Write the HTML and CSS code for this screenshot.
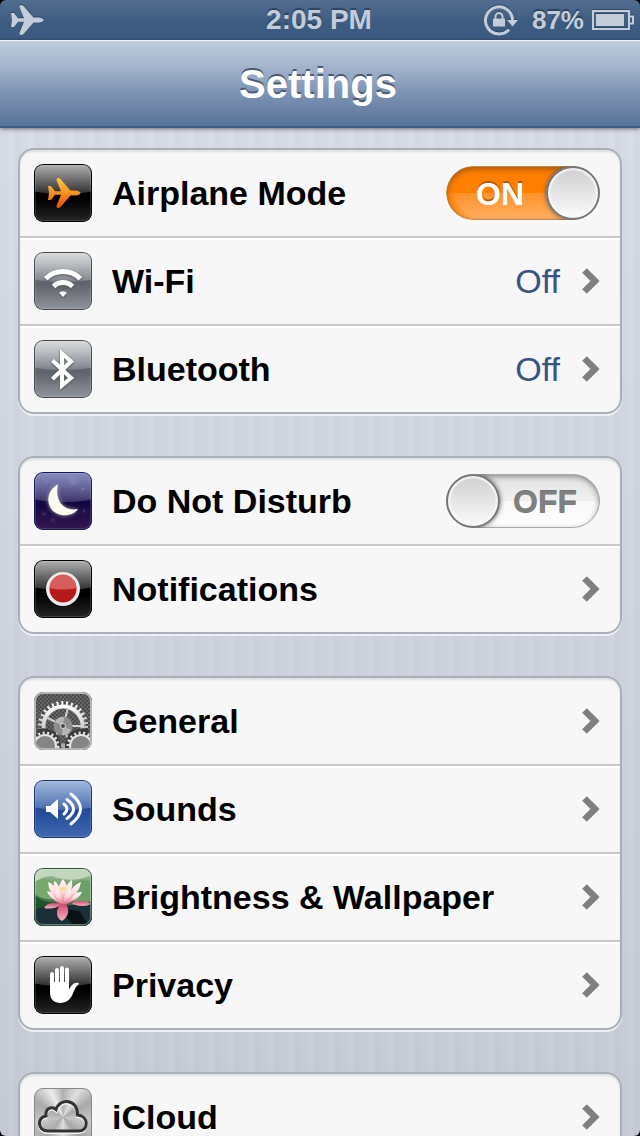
FILE: index.html
```html
<!DOCTYPE html>
<html lang="en">
<head>
<meta charset="utf-8">
<meta name="viewport" content="width=device-width">
<title>Settings</title>
<link rel="stylesheet" href="styles.css">
</head>
<body>
<svg class="defs" aria-hidden="true">
  <defs>
    <symbol id="plane" viewBox="0 0 34 32">
      <path d="M1 9H4L8 14.2H14L9.5 3Q9.3 1 11 1Q12.5 1 13.500 2L23.500 13.500H29Q33.500 14.500 33.500 16Q33.500 17.500 29 18.500H23.500L13.500 30Q12.500 31 11 31Q9.300 31 9.500 29L14 17.800H8L4 23H1L2 16Z"/>
    </symbol>
    <symbol id="chevron" viewBox="0 0 18 26">
      <path d="M2.500 2.500L13 13L2.500 23.500" fill="none" stroke="#7f7f7f" stroke-width="6.500"/>
    </symbol>
    <linearGradient id="flame" x1="0" y1="0" x2="0" y2="1">
      <stop offset="0" stop-color="#ffc83d"/><stop offset=".5" stop-color="#f69022"/><stop offset="1" stop-color="#e84e00"/>
    </linearGradient>
    <linearGradient id="steel" x1="0" y1="0" x2="0" y2="1">
      <stop offset="0" stop-color="#fafafa"/><stop offset="1" stop-color="#a8a8a8"/>
    </linearGradient>
    <linearGradient id="petal" x1="0" y1="0" x2="0" y2="1">
      <stop offset="0" stop-color="#fffaf5"/><stop offset=".5" stop-color="#fbd8dc"/><stop offset="1" stop-color="#e0607f"/>
    </linearGradient>
    <linearGradient id="pink" x1="0" y1="0" x2="0" y2="1">
      <stop offset="0" stop-color="#d44a72"/><stop offset="1" stop-color="#f6b4bf"/>
    </linearGradient>
    <linearGradient id="pond" x1="0" y1="0" x2="0" y2="1">
      <stop offset="0" stop-color="#a9c9a3"/><stop offset=".5" stop-color="#4c8050"/><stop offset="1" stop-color="#14242a"/>
    </linearGradient>
    <pattern id="mesh" width="4" height="4" patternUnits="userSpaceOnUse">
      <rect width="4" height="4" fill="#666"/><circle cx="1" cy="1" r=".8" fill="#2a2a2a"/><circle cx="3" cy="3" r=".8" fill="#2a2a2a"/>
    </pattern>
  </defs>
</svg>

<div class="screen">
  <div class="status">
    <div class="status-left">
      <svg class="status-plane" viewBox="0 0 34 32" role="img" aria-label="Airplane mode"><use href="#plane"/></svg>
    </div>
    <div class="clock">2:05 PM</div>
    <div class="status-right">
      <svg class="lock" viewBox="0 0 34 32" role="img" aria-label="Rotation locked">
        <path d="M25 25.500A13.500 13.500 0 1 1 28.500 17" fill="none" stroke="currentColor" stroke-width="3"/>
        <path d="M23 16H34L28.500 22.500Z"/>
        <path d="M9 14.500H21V22.500H9Z"/>
        <path d="M11.500 15V12.500a3.500 3.500 0 0 1 7 0V15" fill="none" stroke="currentColor" stroke-width="2"/>
      </svg>
      <span class="percent">87%</span>
      <svg class="battery" viewBox="0 0 42 20" role="img" aria-label="Battery">
        <path d="M1 1H37V19H1Z" fill="none" stroke="currentColor" stroke-width="2"/>
        <path d="M4 4H32V16H4Z"/>
        <path d="M38 6.500H41V13.500H38" fill="none" stroke="currentColor" stroke-width="2"/>
      </svg>
    </div>
  </div>

  <header class="navbar"><h1>Settings</h1></header>

  <main class="content">
    <section class="group">
      <label class="row" for="airplane">
        <span class="icon black gloss"><svg viewBox="0 0 58 58"><use href="#plane" x="13" y="13" width="34" height="32" fill="url(#flame)"/></svg></span>
        <span class="name">Airplane Mode</span>
        <span class="switch"><input id="airplane" type="checkbox" role="switch" checked><span class="state on">ON</span><span class="state off">OFF</span><span class="knob"></span></span>
      </label>
      <a class="row" href="#wifi">
        <span class="icon gray gloss"><svg viewBox="0 0 58 58" fill="none" stroke="#fff" stroke-width="5">
          <path d="M11.700 26.700A24.500 24.500 0 0 1 46.300 26.700"/><path d="M19.500 34.500A13.500 13.500 0 0 1 38.500 34.500"/><path d="M25 40.800Q29 37.800 33 40.800L29 45Z" fill="#fff" stroke="none"/>
        </svg></span>
        <span class="name">Wi-Fi</span>
        <span class="value">Off</span>
        <svg class="chevron" aria-hidden="true"><use href="#chevron"/></svg>
      </a>
      <a class="row" href="#bluetooth">
        <span class="icon gray gloss"><svg viewBox="0 0 58 58" fill="none" stroke="#fff" stroke-width="4">
          <path d="M18.500 20.500L37 38L28 45.500V13.500L37 21.500L18.500 39"/>
        </svg></span>
        <span class="name">Bluetooth</span>
        <span class="value">Off</span>
        <svg class="chevron" aria-hidden="true"><use href="#chevron"/></svg>
      </a>
    </section>

    <section class="group">
      <label class="row" for="dnd">
        <span class="icon night gloss"><svg class="glow" viewBox="0 0 58 58">
          <path d="M24 12.500C11 19 12 36 22 41C30 45.500 40 43 44 37C30 40 20 29 24 12.500Z" fill="#fdfcf3"/>
          <g fill="#7a80c8"><path d="M39 4l1 4 4 1-4 1-1 4-1-4-4-1 4-1z"/><circle cx="12" cy="10" r="1"/><circle cx="49" cy="17" r="1"/></g>
          <g fill="#4a3a86"><circle cx="50" cy="39" r="1"/><circle cx="10" cy="42" r="1"/><circle cx="19" cy="48" r="1"/></g>
        </svg></span>
        <span class="name">Do Not Disturb</span>
        <span class="switch"><input id="dnd" type="checkbox" role="switch"><span class="state on">ON</span><span class="state off">OFF</span><span class="knob"></span></span>
      </label>
      <a class="row" href="#notifications">
        <span class="icon black gloss"><svg viewBox="0 0 58 58">
          <circle cx="29" cy="29" r="17" fill="#ececec"/><circle cx="29" cy="29" r="13.500" fill="#b51a1a"/>
          <path d="M15.500 28A13.500 13.500 0 0 1 42.500 28Q29 31 15.500 28Z" fill="#d85c5c"/>
        </svg></span>
        <span class="name">Notifications</span>
        <svg class="chevron" aria-hidden="true"><use href="#chevron"/></svg>
      </a>
    </section>

    <section class="group">
      <a class="row" href="#general">
        <span class="icon metal"><svg viewBox="0 0 58 58">
          <rect x="2" y="2" width="54" height="54" rx="6" fill="url(#mesh)"/>
          <g fill="none" stroke="url(#steel)">
            <circle cx="29" cy="34" r="19.500" stroke-width="4"/>
            <circle cx="29" cy="34" r="23" stroke-width="4" stroke-dasharray="2 2.817"/>
          </g>
          <path d="M29 34L34 16M29 34L12 25M29 34H48M29 34L17 49M29 34L36 52" stroke="#d0d0d0" stroke-width="2"/>
          <circle cx="29" cy="34" r="9.500" fill="#8d8d8d"/><path d="M29 34L21 30A9 9 0 0 1 30 25ZM29 34L37 38A9 9 0 0 1 28 43Z" fill="#b6b6b6"/>
          <circle cx="29" cy="34" r="2.500" fill="#444" stroke="#ddd"/>
          <path d="M4 37A18 18 0 0 1 27 56H2ZM54 37A18 18 0 0 0 31 56H56Z" fill="#3c3c3c"/>
          <g fill="#858585" stroke="#e4e4e4">
            <circle cx="11" cy="54" r="11" stroke-width="2"/><circle cx="11" cy="54" r="13" fill="none" stroke-width="3" stroke-dasharray="2 2.500"/>
            <circle cx="47" cy="54" r="11" stroke-width="2"/><circle cx="47" cy="54" r="13" fill="none" stroke-width="3" stroke-dasharray="2 2.500"/>
          </g>
          <rect x="1" y="1" width="56" height="56" rx="8" fill="none" stroke="#b4b4b4" stroke-width="2"/>
        </svg></span>
        <span class="name">General</span>
        <svg class="chevron" aria-hidden="true"><use href="#chevron"/></svg>
      </a>
      <a class="row" href="#sounds">
        <span class="icon blue gloss"><svg viewBox="0 0 58 58">
          <path d="M12 26H16L24 19V39L16 32H12Z" fill="#fff"/>
          <path d="M30 24Q36 29 30 34M33 19.500Q46 29 33 38.500M37 14Q56 29 37 44" fill="none" stroke="#fff" stroke-width="3" stroke-linecap="round"/>
        </svg></span>
        <span class="name">Sounds</span>
        <svg class="chevron" aria-hidden="true"><use href="#chevron"/></svg>
      </a>
      <a class="row" href="#brightness">
        <span class="icon photo"><svg viewBox="0 0 58 58">
          <rect width="58" height="58" fill="url(#pond)"/>
          <path d="M0 0H58V7Q38 16 18 8Q8 8 0 15Z" fill="#c3d6be"/>
          <path d="M0 14Q17 6 25 20L24 30Q8 34 0 24Z" fill="#78a76f"/><path d="M34 18Q48 9 58 14V33Q40 38 33 28Z" fill="#6e9d6c"/>
          <path d="M0 27Q14 38 27 33L8 43Q3 41 0 43Z" fill="#1d532d"/>
          <path d="M0 42Q15 36 29 38L58 35V58H0Z" fill="#1b2f38"/><path d="M25 40L45 43L54 56H38Z" fill="#0a1216"/>
          <g fill="url(#petal)">
            <path d="M26 36Q14 29 13 23Q22 24 28 36Z"/><path d="M33 36Q46 30 48 24Q39 23 30 36Z"/>
            <path d="M28 36Q14 25 14 14Q22 16 29 36Z"/><path d="M30 36Q46 25 47 14Q37 17 30 36Z"/>
            <path d="M29 36Q18 23 20 13Q26 15 30 36Z"/><path d="M29 36Q40 23 38 12Q31 15 28 36Z"/>
            <path d="M29 37Q19 24 29 11Q39 24 30 37Z"/>
            <path d="M29 37Q19 30 22 20Q28 24 29 37Z"/><path d="M29 37Q40 30 36 20Q30 24 29 37Z"/>
          </g>
          <g fill="url(#pink)"><path d="M27 36Q14 33 10 40Q21 42 27 36Z"/><path d="M39 34Q50 31 57 36Q50 40 38 36Z"/><path d="M26 36Q19 48 28 53Q38 46 32 36Z"/></g>
          <path d="M26 20Q29 18 33 20L31 23H27Z" fill="#f3de93"/>
          <rect x=".5" y=".5" width="57" height="57" rx="8.500" fill="none" stroke="#2f5540"/>
          <rect x="1.500" y="1.500" width="55" height="55" rx="7.500" fill="none" stroke="#dff0e4" stroke-opacity=".4"/>
        </svg></span>
        <span class="name">Brightness &amp; Wallpaper</span>
        <svg class="chevron" aria-hidden="true"><use href="#chevron"/></svg>
      </a>
      <a class="row" href="#privacy">
        <span class="icon black gloss"><svg viewBox="0 0 58 58">
          <path d="M18 32V18M23 30V14M28 30V12M33 30V13.500" stroke="#fff" stroke-width="4" stroke-linecap="round"/>
          <path d="M16 26H35V33Q38 28 41 27Q45 26 45 28Q42 30 40 35Q36 47 27 47Q16 47 16 36Z" fill="#fff"/>
        </svg></span>
        <span class="name">Privacy</span>
        <svg class="chevron" aria-hidden="true"><use href="#chevron"/></svg>
      </a>
    </section>

    <section class="group">
      <a class="row" href="#icloud">
        <span class="icon brushed"><svg viewBox="0 0 58 58">
          <path d="M14 43C3 43 3 29 12 28C11 20 18 18 22 21.500C26 9.500 44 11 43.500 27C55 28 55 43 44.500 43Z" fill="none" stroke="#f4f4f4" stroke-width="3" transform="translate(0 1.500)"/>
          <path d="M14 43C3 43 3 29 12 28C11 20 18 18 22 21.500C26 9.500 44 11 43.500 27C55 28 55 43 44.500 43Z" fill="none" stroke="#333" stroke-width="3"/>
        </svg></span>
        <span class="name">iCloud</span>
        <svg class="chevron" aria-hidden="true"><use href="#chevron"/></svg>
      </a>
    </section>
  </main>
</div>
</body>
</html>
```
FILE: styles.css
```css
* { box-sizing: border-box; }
body {
  margin: 0;
  background: #000;
  font-family: "Liberation Sans", Helvetica, Arial, sans-serif;
  font-weight: bold;
  color: #000;
}
.defs { position: absolute; width: 0; height: 0; }
.screen {
  height: 100vh;
  display: flex;
  flex-direction: column;
  overflow: hidden;
  border-radius: 6px;
}

.status {
  flex: none;
  display: grid;
  grid-template-columns: 1fr auto 1fr;
  align-items: center;
  height: 40px;
  padding: 0 6px 0 10px;
  background: linear-gradient(#526d90, #3d5b80 60%, #3c5b82);
  color: #c3cdd9;
  fill: currentColor;
  font-size: 28px;
  text-shadow: 0 -2px 1px #2c4360;
}
.status svg { display: block; filter: drop-shadow(0 -1px 0 #304864); }
.status-plane { width: 34px; height: 32px; }
.clock { margin-right: 6px; }
.status-right { display: flex; align-items: center; justify-content: flex-end; gap: 8px; }
.lock { width: 34px; height: 32px; margin-right: 6px; }
.percent { font-size: 26px; }
.battery { width: 42px; height: 20px; }

.navbar {
  flex: none;
  display: flex;
  align-items: center;
  justify-content: center;
  height: 88px;
  padding-right: 4px;
  background: linear-gradient(#bfcddd, #aab9d1 25%, #7f94b4 60%, #567299);
  border-top: 1px solid #eef2f7;
  border-bottom: 2px solid #3d5b85;
  box-shadow: 0 1px 4px rgba(0, 0, 0, .5);
  z-index: 1;
}
.navbar h1 {
  margin: 0;
  font-size: 40px;
  line-height: 48px;
  color: #fff;
  text-shadow: 0 -2px 0 #4a5a70;
}

.content {
  flex: 1;
  min-height: 0;
  overflow: auto;
  scrollbar-width: none;
  padding: 20px 18px;
  background:
    repeating-linear-gradient(90deg, rgba(100, 125, 170, .03) 0 8px, transparent 8px 14px, rgba(100, 125, 170, .05) 14px 20px),
    linear-gradient(#d9dde6, #c8ccd6);
}
.group {
  margin-bottom: 42px;
  border: 2px solid #a9afba;
  border-radius: 16px;
  background: #f7f7f7;
  box-shadow: 0 2px 0 #eef0f4, inset 0 2px 2px #dfdfe2;
}
.row {
  display: flex;
  align-items: center;
  padding: 14px 20px 14px 14px;
  color: inherit;
  text-decoration: none;
  font-size: 34px;
  line-height: 40px;
}
.row + .row { box-shadow: inset 0 2px 0 #fff; }
.row:not(:last-child) { border-bottom: 2px solid #c8c8c8; }
.name { flex: 1; margin-left: 20px; }
.value { color: #385487; font-weight: normal; }
.chevron { width: 18px; height: 26px; margin-left: 22px; }

.icon {
  position: relative;
  flex: none;
  width: 58px;
  height: 58px;
  border-radius: 9px;
  overflow: hidden;
}
.icon svg { position: relative; display: block; width: 58px; height: 58px; z-index: 1; }
.gloss::before {
  content: "";
  position: absolute;
  left: -20px;
  right: -20px;
  top: -30px;
  height: 60px;
  border-radius: 0 0 50% 50% / 0 0 14px 14px;
  background: linear-gradient(transparent 50%, rgba(255, 255, 255, var(--shine, .7)) 50%, rgba(255, 255, 255, .18));
}
.gloss::after {
  content: "";
  position: absolute;
  inset: 0;
  border-radius: 9px;
  box-shadow: inset 0 0 0 1px var(--edge), inset 0 0 0 2px rgba(255, 255, 255, .15);
}
.black { --edge: #000; background: linear-gradient(#000 60%, #262626); }
.gray { --edge: #45484e; background: linear-gradient(#858a92, #5d626c 55%, #91959c); }
.gray svg { filter: drop-shadow(0 1px 1px #555); }
.night { --edge: #1a1757; --shine: .45; background: linear-gradient(#2a3291, #120642 55%, #361650); }
.blue { --edge: #1c366e; --shine: .55; background: linear-gradient(#3465b4, #20499a 50%, #4267ad); }
.glow { filter: drop-shadow(0 0 2px #a8a49a); }
.metal { background: #555; }
.photo { background: #1b2f38; }
.brushed {
  border: 1px solid #888;
  background: conic-gradient(#b0b0b0, #e0e0e0 30deg, #a8a8a8 60deg, #c8c8c8 100deg, #a4a4a4 140deg, #e2e2e2 180deg, #aaa 220deg, #c4c4c4 260deg, #a9a9a9 300deg, #ededed 335deg, #b0b0b0);
}
.brushed svg { margin: -1px; }

.switch {
  position: relative;
  display: block;
  width: 154px;
  height: 54px;
  border-radius: 27px;
  overflow: hidden;
}
.switch input {
  appearance: none;
  display: block;
  width: 100%;
  height: 100%;
  margin: 0;
  border-radius: 27px;
  background: linear-gradient(#e4e4e4, #efefef 49%, #f9f9f9 50%, #fff);
  box-shadow: inset 0 0 0 1px #aaa, inset 0 2px 6px #777;
}
.switch input:checked {
  background:
    linear-gradient(#ff962f, #ffb266) 0 0 / 0 0 no-repeat,
    linear-gradient(#ff8000 50%, #ff9229 50%, #ffb063);
  box-shadow: inset 0 0 0 1px #b98b5c, inset 0 3px 6px #a25400, inset 9px 0 6px -3px #ff8000;
}
.state {
  position: absolute;
  top: 8px;
  font-size: 32px;
  line-height: 40px;
}
.on { left: 30px; color: #fff; text-shadow: 0 -2px 0 #b85c08; display: none; }
.off { right: 23px; color: #808080; text-shadow: 0 -1px 0 #747474; }
.switch input:checked ~ .on { display: block; }
.switch input:checked ~ .off { display: none; }
.knob {
  position: absolute;
  top: 0;
  left: 0;
  width: 54px;
  height: 54px;
  border: 2px solid #777;
  border-radius: 50%;
  background: linear-gradient(#cecece, #fcfcfc);
  box-shadow: inset 0 0 2px 2px #f8f8f8, 0 0 5px #555;
}
.switch input:checked ~ .knob { left: auto; right: 0; }
```
